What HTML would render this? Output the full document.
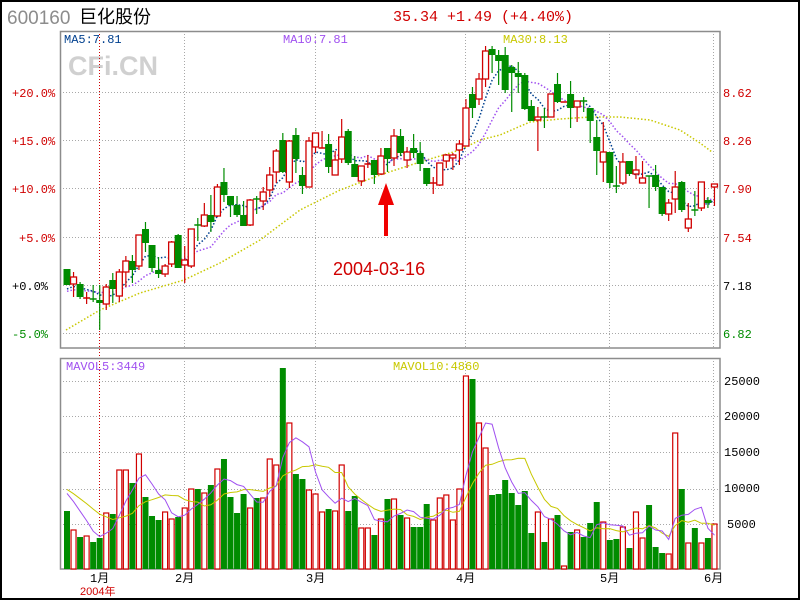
<!DOCTYPE html>
<html><head><meta charset="utf-8"><style>
html,body{margin:0;padding:0;background:#fff}
svg{display:block}
text{font-family:"Liberation Mono",monospace;font-size:12px}
</style></head><body>
<svg id="s" width="800" height="600" viewBox="0 0 800 600" xmlns="http://www.w3.org/2000/svg">
<rect x="1" y="1" width="798" height="598" fill="#fff" stroke="#000" stroke-width="2"/>
<text x="7" y="24" style="font-family:'Liberation Sans',sans-serif;font-size:19px" fill="#8c8c8c">600160</text>
<text x="79" y="23" style="font-family:'Liberation Sans','Noto Sans CJK SC',sans-serif;font-size:18px" fill="#000">巨化股份</text>
<text x="393" y="21" style="font-size:15px" fill="#d00000">35.34 +1.49 (+4.40%)</text>
<text x="68" y="75" style="font-family:'Liberation Sans',sans-serif;font-size:27px;font-weight:bold" fill="#d0d0d0">CFi.CN</text>
<g id="grid" stroke="#a8a8a8" stroke-dasharray="1 2" stroke-width="1">
<line x1="60" y1="92.5" x2="720" y2="92.5"/><line x1="60" y1="140.5" x2="720" y2="140.5"/><line x1="60" y1="188.5" x2="720" y2="188.5"/><line x1="60" y1="237.5" x2="720" y2="237.5"/><line x1="60" y1="285.5" x2="720" y2="285.5"/><line x1="60" y1="333.5" x2="720" y2="333.5"/>
<line x1="60" y1="381.5" x2="720" y2="381.5"/><line x1="60" y1="416.5" x2="720" y2="416.5"/><line x1="60" y1="452.5" x2="720" y2="452.5"/><line x1="60" y1="489.5" x2="720" y2="489.5"/><line x1="60" y1="524.5" x2="720" y2="524.5"/>
<line x1="184.5" y1="31" x2="184.5" y2="348"/><line x1="315.5" y1="31" x2="315.5" y2="348"/><line x1="465.5" y1="31" x2="465.5" y2="348"/><line x1="609.5" y1="31" x2="609.5" y2="348"/><line x1="713.5" y1="31" x2="713.5" y2="348"/>
<line x1="184.5" y1="358" x2="184.5" y2="569"/><line x1="315.5" y1="358" x2="315.5" y2="569"/><line x1="465.5" y1="358" x2="465.5" y2="569"/><line x1="609.5" y1="358" x2="609.5" y2="569"/><line x1="713.5" y1="358" x2="713.5" y2="569"/>
</g>
<line x1="99.5" y1="31" x2="99.5" y2="569" stroke="#d00000" stroke-dasharray="1 2"/>
<rect x="60.5" y="31.5" width="659.5" height="316.5" fill="none" stroke="#8c8c8c" stroke-width="1.5"/>
<rect x="60.5" y="358.5" width="659.5" height="210.5" fill="none" stroke="#8c8c8c" stroke-width="1.5"/>
<g id="plot"></g>
<text x="64" y="43" fill="#00408f">MA5:7.81</text>
<text x="283" y="43" fill="#a050f0">MA10:7.81</text>
<text x="503" y="43" fill="#c8c800">MA30:8.13</text>
<text x="66" y="370" fill="#a050f0">MAVOL5:3449</text>
<text x="393" y="370" fill="#c8c800">MAVOL10:4860</text>
<g fill="#d00000"><text x="12" y="97">+20.0%</text><text x="12" y="145">+15.0%</text><text x="12" y="193">+10.0%</text><text x="19" y="242">+5.0%</text></g>
<text x="12" y="290" fill="#000">+0.0%</text><text x="12" y="338" fill="#008c00">-5.0%</text>
<g fill="#d00000"><text x="723" y="97">8.62</text><text x="723" y="145">8.26</text><text x="723" y="193">7.90</text><text x="723" y="242">7.54</text></g>
<text x="723" y="290" fill="#000">7.18</text><text x="723" y="338" fill="#008c00">6.82</text>
<g fill="#000" style="font-family:'Liberation Sans',sans-serif;font-size:12px"><text x="724" y="385">25000</text><text x="724" y="420">20000</text><text x="724" y="456">15000</text><text x="724" y="492">10000</text><text x="727" y="528">5000</text></g>
<g fill="#000" style="font-family:'Liberation Sans','Noto Sans CJK SC',sans-serif;font-size:12px"><text x="90" y="582">1月</text><text x="175" y="582">2月</text><text x="306" y="582">3月</text><text x="456" y="582">4月</text><text x="600" y="582">5月</text><text x="704" y="582">6月</text></g>
<text x="80" y="595" fill="#d00000" style="font-family:'Liberation Sans','Noto Sans CJK SC',sans-serif;font-size:11px">2004年</text>
<polygon points="378,205 386,183 394,205 388,205 388,236 384,236 384,205" fill="#f00000"/>
<text x="333" y="275" fill="#d00000" style="font-family:'Liberation Sans',sans-serif;font-size:18px">2004-03-16</text>
</svg>
<script>
var C=[[0,269,285,269,285],[1,277,284,272,297],[0,284,297,282,299],[1,298,298,292,304],[0,299,299,285,302],[0,300,303,285,330],[1,287,304,284,310],[0,280,289,273,303],[1,272,296,269,302],[1,261,272,256,287],[0,261,270,255,283],[1,235,266,235,270],[0,229,243,222,252],[0,245,268,245,272],[0,270,274,257,278],[1,266,274,264,277],[1,242,264,241,267],[0,235,268,234,268],[1,260,265,246,283],[1,229,266,229,268],[0,225,225,218,241],[1,215,226,203,227],[0,215,222,195,232],[1,187,216,184,217],[0,182,195,168,202],[0,196,205,196,217],[0,205,215,196,217],[0,215,226,201,226],[1,200,225,199,226],[0,199,199,196,214],[1,192,201,187,210],[1,175,190,167,197],[1,151,172,149,183],[0,140,172,133,173],[1,141,182,140,188],[0,135,159,128,173],[0,175,186,167,194],[1,141,187,137,187],[1,133,147,133,153],[1,148,148,131,148],[0,144,167,134,173],[1,160,175,151,175],[1,137,159,119,163],[0,131,163,129,165],[0,164,177,156,177],[1,166,181,166,186],[1,164,164,155,168],[0,160,175,160,184],[1,156,174,148,175],[0,148,159,148,172],[1,136,158,129,166],[0,136,153,129,156],[1,152,160,147,168],[0,148,153,134,158],[0,153,164,142,171],[0,168,184,168,186],[1,183,183,177,194],[1,163,185,163,186],[1,155,161,154,168],[1,155,158,153,170],[1,144,150,140,165],[1,108,146,99,146],[0,94,108,87,118],[1,79,99,73,105],[1,51,79,46,87],[0,49,55,46,73],[0,55,61,50,85],[0,55,90,47,93],[0,67,73,65,112],[0,73,77,62,93],[0,75,109,73,110],[0,106,121,100,121],[1,117,120,107,151],[0,117,117,108,128],[1,94,117,94,117],[0,84,102,73,103],[1,102,102,102,102],[0,94,108,81,128],[1,101,107,101,122],[0,101,101,97,112],[0,108,121,108,143],[0,137,151,120,175],[1,152,162,122,182],[0,152,183,152,188],[0,186,186,166,193],[1,162,183,153,185],[0,161,174,161,176],[1,170,174,156,179],[1,178,183,161,183],[0,176,176,176,208],[0,175,187,165,191],[0,187,214,187,216],[1,203,214,199,221],[1,187,199,171,213],[0,182,210,181,212],[1,219,228,203,232],[0,210,210,191,216],[1,182,208,182,211],[0,200,203,197,208],[1,184,187,184,206]];
var V=[511,530,537,536,542,538,513,514,470,470,483,454,497,516,520,512,519,517,508,489,489,493,485,469,459,497,513,494,508,498,498,459,465,368,423,474,479,490,494,512,509,511,465,511,496,528,528,535,519,499,499,515,518,527,527,504,520,498,495,520,489,376,379,423,448,495,494,480,493,505,491,533,512,542,519,515,566,532,530,537,523,502,522,540,539,527,548,512,538,505,547,553,554,433,489,543,528,543,538,524];
var NS="http://www.w3.org/2000/svg",g=document.getElementById("plot"),h="";
function X(i){return 67+i*6.54}
function ma(arr,n,pad){var o=[];for(var i=0;i<arr.length;i++){var s=0;for(var k=i-n+1;k<=i;k++)s+=(k<0?pad:arr[k]);o.push(s/n)}return o}
function pl(a,st,da,sw){var p=a.map(function(v,i){return X(i).toFixed(1)+","+v.toFixed(1)}).join(" ");return '<polyline points="'+p+'" fill="none" stroke="'+st+'" stroke-width="'+sw+'"'+(da?' stroke-dasharray="'+da+'"':'')+'/>'}
var cl=C.map(function(c){return c[0]?c[1]:c[2]});
var m30=[[66,330],[100,310],[140,293],[184,280],[220,263],[260,240],[300,210],[340,190],[380,175],[420,162],[460,150],[480,140],[500,135],[530,122],[560,119],[590,117],[620,117],[650,120],[680,130],[700,143],[712,152]];
h+='<polyline points="'+m30.join(" ")+'" fill="none" stroke="#c8c800" stroke-width="1.5" stroke-dasharray="1.5 2"/>';
h+=pl(ma(cl,10,292),"#a050f0","1.5 2",1.5);
h+=pl(ma(cl,5,290),"#00408f","1.5 2",1.5);
for(var i=0;i<C.length;i++){var c=C[i],x=X(i),col=c[0]?"#d00000":"#008c00";
h+='<line x1="'+x+'" y1="'+c[3]+'" x2="'+x+'" y2="'+c[4]+'" stroke="'+col+'" stroke-width="1.2"/>';
if(c[1]==c[2])h+='<line x1="'+(x-3.5)+'" y1="'+c[1]+'" x2="'+(x+3.5)+'" y2="'+c[1]+'" stroke="'+col+'" stroke-width="1.5"/>';
else if(c[0])h+='<rect x="'+(x-3)+'" y="'+c[1]+'" width="6" height="'+(c[2]-c[1])+'" fill="#fff" stroke="'+col+'" stroke-width="1.3"/>';
else h+='<rect x="'+(x-3.5)+'" y="'+c[1]+'" width="7" height="'+(c[2]-c[1])+'" fill="'+col+'"/>';
var t=V[i];
if(C[i][0])h+='<rect x="'+(x-2.5)+'" y="'+t+'" width="5" height="'+(569-t)+'" fill="#fff" stroke="#d00000" stroke-width="1.2"/>';
else h+='<rect x="'+(x-3)+'" y="'+t+'" width="6" height="'+(569-t)+'" fill="#008c00"/>';}
var vh=V.map(function(v){return 569-v});
h+=pl(ma(vh,10,82).map(function(v){return 569-v}),"#c8c800","",1);
h+=pl(ma(vh,5,80).map(function(v){return 569-v}),"#a050f0","",1);
g.innerHTML=h;
</script>
</body></html>
